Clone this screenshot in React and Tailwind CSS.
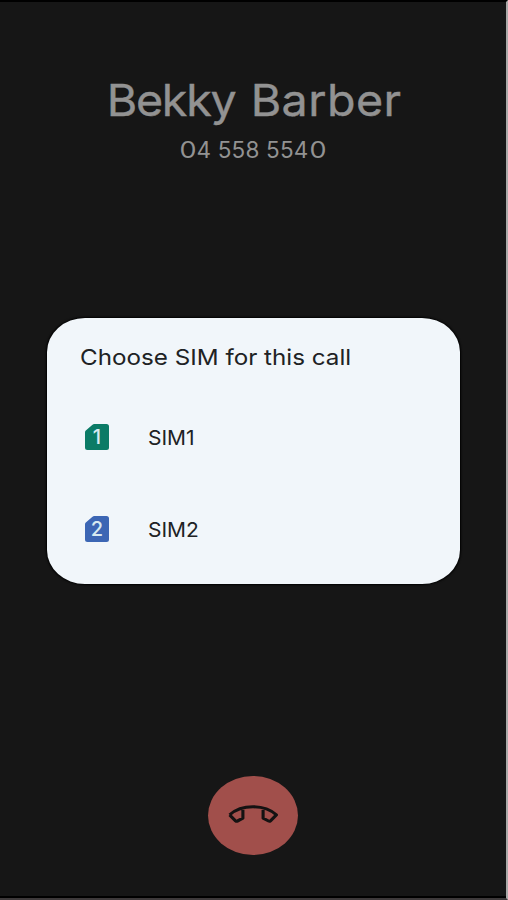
const sims = [
  { id: "1", label: "SIM1", color: "text-[#0b7b66]" },
  { id: "2", label: "SIM2", color: "text-[#3c66b4]" },
];

function SimIcon({ id, color }) {
  return (
    <svg viewBox="0 0 24 26" className={`h-[26px] w-6 ${color}`} aria-hidden="true">
      <path
        d="M9.4 0H21.5Q24 0 24 2.5V23.5Q24 26 21.5 26H2.5Q0 26 0 23.5V8.4Q0 7.3.8 6.5L7.2.9Q8.2 0 9.4 0Z"
        fill="currentColor"
      />
      <text
        x="12"
        y="20"
        textAnchor="middle"
        fill="#d7eaf0"
        className="font-['Inter'] text-[20px] font-medium"
      >
        {id}
      </text>
    </svg>
  );
}

function HangUpIcon() {
  return (
    <svg viewBox="0 0 50 18" className="-mt-[3px] h-[18px] w-[50px]" fill="none" aria-hidden="true">
      <path
        d="M1.6 9.9C7.5 4.6 15 1.8 25 1.8S42.5 4.6 48.4 9.9L42.5 15.8Q41.6 16.6 40.5 16L35.1 13.2V3.2M14.9 3.2V13.2L9.5 16Q8.4 16.6 7.5 15.8L1.6 9.9"
        stroke="#141212"
        strokeWidth="3.1"
        strokeLinejoin="round"
      />
    </svg>
  );
}

export default function App() {
  return (
    <div className="flex h-[900px] w-[508px] flex-col items-center border-t-2 border-r-2 border-b-2 border-t-black border-r-[#aaa9a9] border-b-[#3d393a] bg-[#161616] font-['Inter',sans-serif] shadow-[inset_0_-2px_0_black]">
      <header className="flex w-full flex-col items-center pt-[70px] text-[#929292]">
        <h1 className="ml-[2px] scale-x-[1.06] text-[44px] leading-[56px] whitespace-nowrap [-webkit-text-stroke:0.4px_#929292]">
          <span className="tracking-[-1.2px]">Bekky</span>{" "}
          <span className="ml-[2px] tracking-[0.4px]">Barber</span>
        </h1>
        <p className="mt-2 flex text-[22.5px] leading-7 whitespace-pre">
          <span className="mr-[1px] scale-x-[1.2]">0</span>
          <span className="tracking-[0.2px]">4 558 554</span>
          <span className="ml-[2px] scale-x-[1.2]">0</span>
        </p>
      </header>

      <section className="mt-[154px] h-[266px] w-[413px] rounded-[38px/34px] bg-[#f1f6fa] pl-[33px] text-[#202224] shadow-[0_0_2px_1px_black]">
        <h2 className="w-max origin-left scale-x-110 pt-6 text-[22px] leading-[30px] whitespace-nowrap">
          Choose SIM for this call
        </h2>
        <ul className="mt-[19px]">
          {sims.map((sim) => (
            <li key={sim.id} className="flex h-[92px] items-center pl-[5px]">
              <SimIcon id={sim.id} color={sim.color} />
              <span className="ml-[39px] origin-left scale-x-[1.05] pt-px text-[20px] leading-6">{sim.label}</span>
            </li>
          ))}
        </ul>
      </section>

      <button
        type="button"
        aria-label="End call"
        className="mt-[192px] flex h-[79px] w-[90px] shrink-0 items-center justify-center rounded-[50%] bg-[#a14f4b]"
      >
        <HangUpIcon />
      </button>
    </div>
  );
}
